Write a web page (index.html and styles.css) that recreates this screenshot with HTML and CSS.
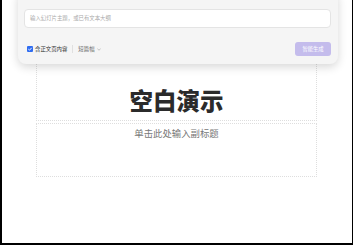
FILE: index.html
```html
<!DOCTYPE html>
<html lang="zh-CN">
<head>
    <meta charset="UTF-8">
    <meta name="viewport" content="width=device-width, initial-scale=1.0">
    <title>空白演示</title>
    <link rel="stylesheet" href="styles.css">
</head>
<body>
    <div class="page">
        <div class="slide">
            <div class="title-box">
                <h1>空白演示</h1>
            </div>
            <div class="subtitle-box">
                <p>单击此处输入副标题</p>
            </div>
        </div>

        <div class="ai-panel">
            <div class="prompt-input">输入幻灯片主题，或已有文本大纲</div>
            <div class="panel-row">
                <label class="check">
                    <span class="check-box">
                        <svg viewBox="0 0 6 6" width="6" height="6"><path d="M1.3 3.1 L2.5 4.2 L4.7 1.8" fill="none" stroke="#fff" stroke-width="0.9"/></svg>
                    </span>
                    含正文页内容
                </label>
                <span class="divider"></span>
                <span class="length">短篇幅
                    <svg viewBox="0 0 5 3" width="4" height="3"><path d="M0.5 0.6 L2.5 2.4 L4.5 0.6" fill="none" stroke="#888" stroke-width="0.6"/></svg>
                </span>
                <button class="generate-btn">智能生成</button>
            </div>
        </div>
    </div>
</body>
</html>
```

FILE: styles.css
```css
body {
    margin: 0;
    font-family: "Noto Sans CJK SC", "Noto Sans", sans-serif;
    background-color: #fff;
}
.page {
    position: relative;
    width: 353px;
    height: 245px;
    box-sizing: border-box;
    border-left: 2px solid #000;
    border-right: 1px solid #000;
    border-bottom: 2px solid #000;
    overflow: hidden;
}
.slide {
    margin: 20px 0 0 34px;
    width: 281px;
}
.title-box {
    height: 101px;
    box-sizing: border-box;
    border: 1px dotted #dedede;
    display: flex;
    align-items: flex-end;
    justify-content: center;
    padding-bottom: 5px;
}
.title-box h1 {
    margin: 0;
    font-size: 23.5px;
    line-height: 29px;
    font-weight: 900;
    color: #2b2b2b;
}
.subtitle-box {
    margin-top: 2px;
    height: 54px;
    box-sizing: border-box;
    border: 1px dotted #dedede;
    padding-top: 3px;
    text-align: center;
}
.subtitle-box p {
    margin: 0;
    font-size: 9.4px;
    line-height: 13px;
    color: #777;
}
.ai-panel {
    position: absolute;
    left: 16px;
    top: -10px;
    width: 320px;
    box-sizing: border-box;
    padding: 19px 7px 8px 6px;
    background-color: #f5f5f5;
    border-radius: 8px;
    box-shadow: 0 3px 10px rgba(0, 0, 0, 0.16);
}
.prompt-input {
    height: 19px;
    box-sizing: border-box;
    background-color: #fff;
    border: 1px solid #e4e4e4;
    border-radius: 4px;
    padding-left: 5px;
    font-size: 5.4px;
    line-height: 17px;
    color: #aaa;
}
.panel-row {
    margin-top: 14px;
    height: 14px;
    display: flex;
    align-items: center;
    padding-left: 3px;
    font-size: 5.4px;
}
.check {
    display: flex;
    align-items: center;
    gap: 2px;
    color: #333;
}
.check-box {
    width: 6px;
    height: 6px;
    border-radius: 1px;
    background-color: #2f6cf0;
    display: flex;
}
.divider {
    width: 1px;
    height: 8px;
    background-color: #e0e0e0;
    margin: 0 5px;
}
.length {
    display: flex;
    align-items: center;
    gap: 2px;
    color: #666;
}
.generate-btn {
    margin-left: auto;
    width: 36px;
    height: 14px;
    padding: 0;
    border: none;
    border-radius: 3px;
    background-color: #c4bcec;
    color: #fff;
    font-family: inherit;
    font-size: 5.3px;
}
```
